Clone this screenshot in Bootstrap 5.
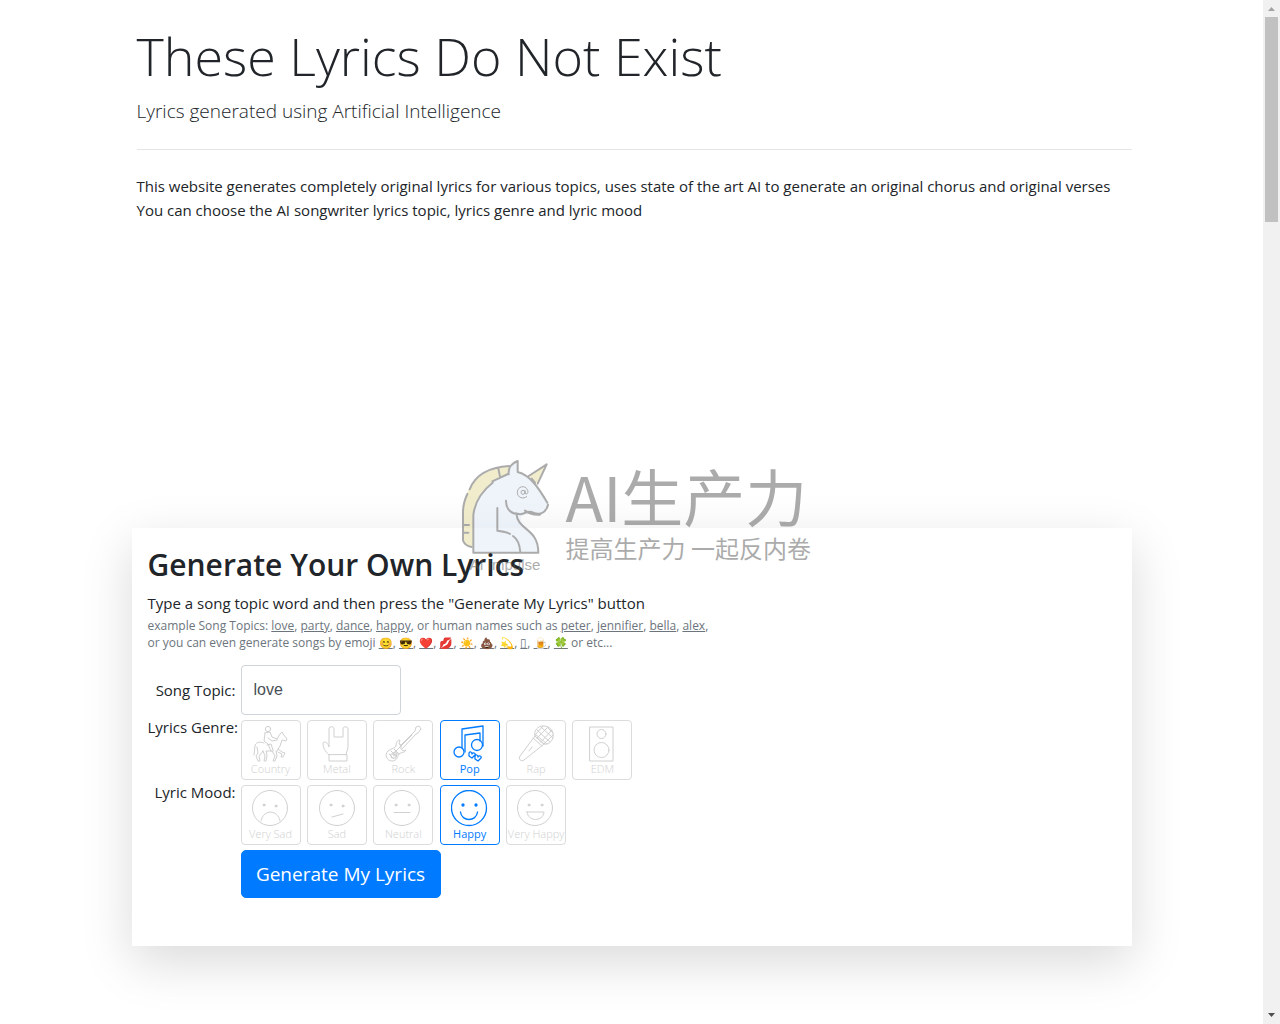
<!DOCTYPE html>
<html lang="en">
<head>
<meta charset="utf-8">
<meta name="viewport" content="width=device-width, initial-scale=1">
<title>These Lyrics Do Not Exist</title>
<link href="https://cdn.jsdelivr.net/npm/bootstrap@5.3.0/dist/css/bootstrap.min.css" rel="stylesheet">
<style>
body{font-family:"Open Sans","Noto Sans","Noto Sans CJK SC",sans-serif;font-size:15px;line-height:24px;color:#212529;background:#fff;padding-right:17px;min-height:100vh}
.page-wrap{max-width:1000px}
.intro{padding:23px 0 0 5px}
.intro h1{font-size:52px;line-height:66px;font-weight:300;margin:0 0 9px}
.tagline{font-size:19px;line-height:27px;font-weight:300;margin:0}
.intro hr{margin:24px 0;border-color:#000;opacity:.1}
.ad-space{height:306px}
.gen-panel{padding:17px 16px 48px;background:#fff;box-shadow:0 16px 48px rgba(0,0,0,.15)}
.gen-panel h2{font-size:30px;line-height:40px;font-weight:600;margin:0 0 6px}
.hint{font-size:12px;line-height:17px;color:#6c757d;padding-top:2px}
.hint a{color:#6c757d;text-decoration:underline}
.hint .emo{font-size:11px}
.hint .box-glyph{font-size:12px}
.gen-form{display:grid;grid-template-columns:88px 1fr;column-gap:5px;row-gap:5px;margin-top:14px}
.gen-form .lab{text-align:right;white-space:nowrap;margin:0;padding:0;float:none;font-size:15px;line-height:14px}
.topic{width:160px;height:50px;font-size:16px;font-family:"Liberation Sans",sans-serif;color:#495057;border:1px solid #ced4da;border-radius:4px;padding:6px 12px}
.tiles{display:grid;grid-template-columns:repeat(6,60px);justify-content:space-between;width:392px}
.tile{height:60px;border:1px solid #dcdcdc;border-radius:4px;color:#d0d0d0;font-size:11px;line-height:12px;padding-top:4px;cursor:pointer;white-space:nowrap;font-weight:300}
.tile svg{width:38px;height:38px;fill:none;stroke:currentColor;stroke-width:1;stroke-linejoin:round;stroke-linecap:round;flex:none}
.btn-check:checked+.tile{border-color:#007bff;color:#007bff;font-weight:400}
.btn-check:checked+.tile svg{stroke-width:1.3}
.tile .eyes{fill:currentColor}
.gen-btn{width:200px;height:48px;font-size:19px;line-height:30px;padding:8px 0;background:#007bff;border-color:#007bff;border-radius:5px}
.stamp{left:323px;top:452px;opacity:.5;color:#5a5a5a;pointer-events:none;white-space:nowrap}
.stamp svg{width:110px;height:105px;display:block}
.stamp-text{padding-left:1px}
.stamp-big{font:400 62px/62px "Noto Sans CJK SC",sans-serif;padding-top:12px}
.stamp-sub{font:400 24px/30px "Noto Sans CJK SC",sans-serif;padding-top:7px}
.stamp-tag{font:400 15px/16px "Liberation Sans",sans-serif;padding-left:15px}
.scroller{width:17px;background:#f1f1f1}
.thumb{height:205px;margin:0 2px;background:#c1c1c1}
.scroller svg{display:block;width:17px;height:17px}
</style>
<script src="https://cdn.jsdelivr.net/npm/bootstrap@5.3.0/dist/js/bootstrap.bundle.min.js"></script>
</head>
<body>
<main class="page-wrap mx-auto position-relative">
<header class="intro">
<h1>These Lyrics Do Not Exist</h1>
<p class="tagline">Lyrics generated using Artificial Intelligence</p>
<hr>
<p class="mb-0">This website generates completely original lyrics for various topics, uses state of the art AI to generate an original chorus and original verses<br>You can choose the AI songwriter lyrics topic, lyrics genre and lyric mood</p>
</header>
<div class="ad-space"></div>
<section class="gen-panel">
<h2>Generate Your Own Lyrics</h2>
<div>Type a song topic word and then press the "Generate My Lyrics" button</div>
<div class="hint">example Song Topics: <a href="#">love</a>, <a href="#">party</a>, <a href="#">dance</a>, <a href="#">happy</a>, or human names such as <a href="#">peter</a>, <a href="#">jennifier</a>, <a href="#">bella</a>, <a href="#">alex</a>,<br>or you can even generate songs by emoji <a class="emo" href="#">😊</a>, <a class="emo" href="#">😎</a>, <a class="emo" href="#">❤️</a>, <a class="emo" href="#">💋</a>, <a class="emo" href="#">☀️</a>, <a class="emo" href="#">💩</a>, <a class="emo" href="#">💫</a>, <a class="box-glyph" href="#">▯</a>, <a class="emo" href="#">🍺</a>, <a class="emo" href="#">🍀</a> or etc...</div>
<form class="gen-form">
<label class="lab align-self-center" for="topic">Song Topic:</label>
<div class="d-flex"><input class="topic" id="topic" type="text" value="love"></div>

<span class="lab" id="genre-label">Lyrics Genre:</span>
<div class="tiles" role="radiogroup" aria-labelledby="genre-label">
<div><input class="btn-check" type="radio" name="genre" id="g1"><label class="tile d-flex flex-column align-items-center" for="g1">
<svg viewBox="0 0 38 38"><circle cx="16" cy="4" r="2.6"/><path d="M13 8l5-1 2 5 5 2M13 8l-1 8 4 3 3 7M16 13l4 3 5-1M25 14l3-5 2-2 1 2 4 5-1 2-4-1-2 6-3 5M12 18c-5-2-9 0-9 3l-1 9M5 22l1 6-2 3 2 5h2l-1-5 4-5M11 26l2 5-1 5h2l1-6-1-4h7M20 26l3 5-2 5h2l2-5-1-5M26 24l4 3 3 1-2 4h-2l1-3-4-2M15 20l4-1 2 6"/></svg>Country</label></div>
<div><input class="btn-check" type="radio" name="genre" id="g2"><label class="tile d-flex flex-column align-items-center" for="g2">
<svg viewBox="0 0 38 38"><path d="M11 30v6h18v-6zM11 30c-4-4-6-7-6-12 1-2 5-1 6 4V4c0-3 5-3 5 0v8h9V4c0-3 5-3 5 0v18c0 3-2 5-2 8"/></svg>Metal</label></div>
<div><input class="btn-check" type="radio" name="genre" id="g3"><label class="tile d-flex flex-column align-items-center" for="g3">
<svg viewBox="0 0 38 38"><path d="M16 21L31 6l1-4 3-1 2 3-3 4-2 1-14 15M17 20l-2-1 1-4c-3 0-4 3-4 6-1 3-5 2-8 5-4 4-1 10 4 10 5 0 5-4 7-7 2-2 6-1 7-4-2 1-4 1-5-1zM7 26l6 6M5 29l5 5M10 24l5 5M9 29l19-19M7 29h5v4H8z"/><circle cx="11" cy="29" r="2"/></svg>Rock</label></div>
<div><input class="btn-check" type="radio" name="genre" id="g4" checked><label class="tile d-flex flex-column align-items-center" for="g4">
<svg viewBox="0 0 38 38"><circle cx="8" cy="27" r="5"/><circle cx="26" cy="20" r="5.500"/><path d="M11 23V4l21-3v20M14 27V10l15-2v8M18 28c1-2 3-1 3 1 1-2 4-1 3 1l-3 3-3-2zM24 31c1-2 3-1 3 1 1-2 4-1 3 1l-3 3-3-2z"/></svg>Pop</label></div>
<div><input class="btn-check" type="radio" name="genre" id="g5"><label class="tile d-flex flex-column align-items-center" for="g5">
<svg viewBox="0 0 38 38"><path d="M18 11L3 31c-2 3 1 6 4 4l20-16M18 11c-2-5 3-10 8-10 7 0 11 5 10 11-1 5-5 8-9 7zM18 11l9 8M16 13l9 8M20 5l13 12M24 2l12 11M18 9l12 10M29 1l7 7M35 5L24 17M36 10l-9 9M31 2L20 13M26 1l-8 9M15 22l-3 4"/></svg>Rap</label></div>
<div><input class="btn-check" type="radio" name="genre" id="g6"><label class="tile d-flex flex-column align-items-center" for="g6">
<svg viewBox="0 0 38 38"><path d="M7 2h23v34H7z"/><circle cx="18.500" cy="9" r="4.500"/><circle cx="18.500" cy="25" r="7.500"/></svg>EDM</label></div>
</div>

<span class="lab" id="mood-label">Lyric Mood:</span>
<div class="tiles" role="radiogroup" aria-labelledby="mood-label">
<div><input class="btn-check" type="radio" name="mood" id="m1"><label class="tile d-flex flex-column align-items-center" for="m1">
<svg viewBox="0 0 38 38"><circle cx="18" cy="18" r="17.500"/><g class="eyes"><circle cx="12" cy="15" r="1"/><circle cx="24" cy="16" r="1"/></g><path d="M9 31c2-12 17-12 19 0"/></svg>Very Sad</label></div>
<div><input class="btn-check" type="radio" name="mood" id="m2"><label class="tile d-flex flex-column align-items-center" for="m2">
<svg viewBox="0 0 38 38"><circle cx="19" cy="18" r="17.500"/><g class="eyes"><circle cx="13" cy="15" r="1"/><circle cx="25" cy="16" r="1"/></g><path d="M14 27l11-3"/></svg>Sad</label></div>
<div><input class="btn-check" type="radio" name="mood" id="m3"><label class="tile d-flex flex-column align-items-center" for="m3">
<svg viewBox="0 0 38 38"><circle cx="18" cy="18" r="17.500"/><g class="eyes"><circle cx="12" cy="15" r="1"/><circle cx="25" cy="15" r="1"/></g><path d="M10 22.500h16"/></svg>Neutral</label></div>
<div><input class="btn-check" type="radio" name="mood" id="m4" checked><label class="tile d-flex flex-column align-items-center" for="m4">
<svg viewBox="0 0 38 38"><circle cx="18" cy="18" r="17.500"/><g class="eyes"><circle cx="12" cy="15" r="1"/><circle cx="25" cy="15" r="1"/></g><path d="M9.500 22c1 10 16 10 17 0"/></svg>Happy</label></div>
<div><input class="btn-check" type="radio" name="mood" id="m5"><label class="tile d-flex flex-column align-items-center" for="m5">
<svg viewBox="0 0 38 38"><circle cx="18" cy="18" r="17.500"/><g class="eyes"><circle cx="12" cy="15" r="1"/><circle cx="25" cy="15" r="1"/></g><path d="M10 22h17c-1 10-16 10-17 0z"/></svg>Very Happy</label></div>
</div>

<span></span>
<div class="d-flex"><button type="button" class="btn btn-primary gen-btn">Generate My Lyrics</button></div>
</form>
</section>

<div class="stamp position-absolute d-flex">
<div>
<svg viewBox="0 0 330 315" fill="none" stroke="#5a5a5a" stroke-width="6" stroke-linecap="round" stroke-linejoin="round">
<path fill="#e4dc9a" stroke="none" d="M165 42C90 45 25 95 24 180v85c5 12 15 18 30 20V190c5-60 45-100 110-120z"/>
<path fill="#dfebf7" stroke="none" d="M55 302V190c5-60 45-100 106-123 0-20 8-30 27-40v33c35 10 60 50 89 92-5 28-25 38-47 32l-30 8c-15 30 50 40 50 110z"/>
<path fill="#e4dc9a" d="M221 72l54-35-27 58M230 80l10 12"/>
<path d="M55 302V190c4-40 22-70 58-98M55 302h195c0-75-62-65-66-118 25 10 25-10 45-4 22 12 44 4 50-22M161 67c-2-22 8-32 27-40v33c40 10 65 52 89 92M153 146c0 30 20 40 35 40M127 168v68c20 3 30 4 38 10M174 252c15 10 20 25 22 48M210 176c15 10 30 14 45 12"/>
<path d="M163 42C100 46 60 70 44 112M37 126c-9 20-13 35-13 54v85c3 11 12 18 26 20M130 50l5 24M24 219h18M24 242h16M112 88l47-22"/>
<circle cx="204" cy="121" r="6" stroke-width="3"/><path stroke-width="3" d="M210 115v9c8 6 10-4 8-9-7-18-31-12-31 6 0 17 18 21 28 13"/>
</svg>
<div class="stamp-tag">AI Impulse</div>
</div>
<div class="stamp-text">
<div class="stamp-big">AI生产力</div>
<div class="stamp-sub">提高生产力 一起反内卷</div>
</div>
</div>
</main>
<div class="scroller position-fixed top-0 bottom-0 end-0 d-flex flex-column" aria-hidden="true">
<svg viewBox="0 0 17 17"><path fill="#a3a3a3" d="M5 11l3.500-4 3.500 4z"/></svg>
<div class="thumb"></div>
<svg class="mt-auto" viewBox="0 0 17 17"><path fill="#505050" d="M5 6l3.500 4L12 6z"/></svg>
</div>
</body>
</html>
